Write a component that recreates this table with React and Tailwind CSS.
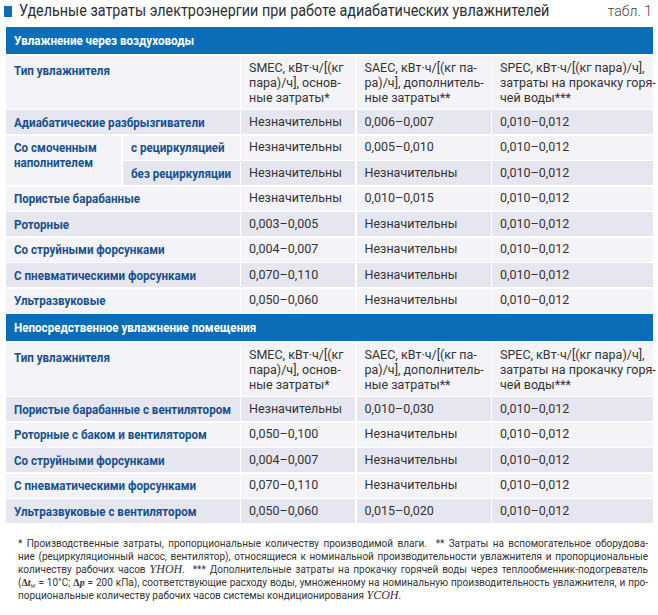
import React from 'react';

const sans = { fontFamily: 'Roboto, "Liberation Sans", sans-serif' };
const math = { fontFamily: '"Liberation Serif", serif' };

// narrow bold label: Roboto squeezed sideways to look like a condensed face
const Cond = ({ children, className = '' }) => (
  <span className={`inline-block origin-left scale-x-[0.86] whitespace-nowrap ${className}`}>{children}</span>
);

const cell = 'pl-2 flex items-center text-[#333] text-[12.5px] whitespace-nowrap';
const label = 'pl-2 flex items-center text-[#17508f] font-bold text-[13.5px]';

const HeaderRow = ({ title }) => (
  <>
    <div className="col-span-5 bg-[#0a6db8] h-[27px] flex items-center pl-2 text-white font-bold text-[13.5px]">
      <Cond>{title}</Cond>
    </div>
    <div className="col-span-2 bg-[#f3f3f8] h-[53px] pl-2 pt-[4px] text-[#17508f] font-bold text-[13.5px]">
      <Cond>Тип увлажнителя</Cond>
    </div>
    <div className="bg-[#f3f3f8] pl-2 pt-[4px] text-[#333] text-[12.5px] leading-[15px] whitespace-nowrap">
      SMEC, кВт·ч/[(кг<br />пара)/ч], основ-<br />ные затраты*
    </div>
    <div className="bg-[#f3f3f8] pl-2 pt-[4px] text-[#333] text-[12.5px] leading-[15px] whitespace-nowrap">
      SAEC, кВт·ч/[(кг па-<br />ра)/ч], дополнитель-<br />ные затраты**
    </div>
    <div className="bg-[#f3f3f8] pl-2 pt-[4px] text-[#333] text-[12.5px] leading-[15px] whitespace-nowrap">
      SPEC, кВт·ч/[(кг пара)/ч],<br />затраты на прокачку горя-<br />чей воды***
    </div>
  </>
);

const Row = ({ name, a, b, c, shaded }) => {
  const bg = shaded ? 'bg-[#e6e6f0]' : 'bg-[#f3f3f8]';
  return (
    <>
      <div className={`col-span-2 ${bg} h-[24px] ${label}`}><Cond>{name}</Cond></div>
      <div className={`${bg} ${cell}`}>{a}</div>
      <div className={`${bg} ${cell}`}>{b}</div>
      <div className={`${bg} ${cell}`}>{c}</div>
    </>
  );
};

const ducts = [
  ['Пористые барабанные', 'Незначительны', '0,010–0,015', '0,010–0,012', false],
  ['Роторные', '0,003–0,005', 'Незначительны', '0,010–0,012', true],
  ['Со струйными форсунками', '0,004–0,007', 'Незначительны', '0,010–0,012', false],
  ['С пневматическими форсунками', '0,070–0,110', 'Незначительны', '0,010–0,012', true],
  ['Ультразвуковые', '0,050–0,060', 'Незначительны', '0,010–0,012', false],
];

const rooms = [
  ['Пористые барабанные с вентилятором', 'Незначительны', '0,010–0,030', '0,010–0,012', true],
  ['Роторные с баком и вентилятором', '0,050–0,100', 'Незначительны', '0,010–0,012', false],
  ['Со струйными форсунками', '0,004–0,007', 'Незначительны', '0,010–0,012', true],
  ['С пневматическими форсунками', '0,070–0,110', 'Незначительны', '0,010–0,012', false],
  ['Ультразвуковые с вентилятором', '0,050–0,060', '0,015–0,020', '0,010–0,012', true],
];

const Line = ({ children, last }) => (
  <div className={last ? 'text-left' : 'text-justify [text-align-last:justify]'}>{children}</div>
);

export default function App() {
  return (
    <div className="w-[658px] h-[615px] bg-white overflow-hidden" style={sans}>
      <div className="flex items-center justify-between h-[22px] pl-[4px] pr-[6px]">
        <div className="flex items-center gap-[7px] min-w-0">
          <div className="w-[8px] h-[11px] bg-[#0a6db8] shrink-0" />
          <span className="inline-block origin-left scale-x-[0.87] whitespace-nowrap text-[16.5px] text-[#2e2e2e]">
            Удельные затраты электроэнергии при работе адиабатических увлажнителей
          </span>
        </div>
        <div className="shrink-0 whitespace-nowrap text-[14px] text-[#444] font-light">табл. 1</div>
      </div>

      <div className="mt-[5px] ml-[6px] w-[647px] grid grid-cols-[115px_117px_114px_134px_161px] gap-[1.5px]">
        <HeaderRow title="Увлажнение через воздуховоды" />
        <Row name="Адиабатические разбрызгиватели" a="Незначительны" b="0,006–0,007" c="0,010–0,012" shaded />

        <div className="row-span-2 bg-[#f3f3f8] pl-2 pt-[4px] text-[#17508f] font-bold text-[13.5px] leading-[15px]">
          <Cond>Со смоченным<br />наполнителем</Cond>
        </div>
        <div className={`bg-[#f3f3f8] h-[24px] ${label}`}><Cond>с рециркуляцией</Cond></div>
        <div className={`bg-[#f3f3f8] ${cell}`}>Незначительны</div>
        <div className={`bg-[#f3f3f8] ${cell}`}>0,005–0,010</div>
        <div className={`bg-[#f3f3f8] ${cell}`}>0,010–0,012</div>
        <div className={`bg-[#e6e6f0] h-[24px] ${label}`}><Cond>без рециркуляции</Cond></div>
        <div className={`bg-[#e6e6f0] ${cell}`}>Незначительны</div>
        <div className={`bg-[#e6e6f0] ${cell}`}>Незначительны</div>
        <div className={`bg-[#e6e6f0] ${cell}`}>0,010–0,012</div>

        {ducts.map(([l, a, b, c, s]) => <Row key={l} name={l} a={a} b={b} c={c} shaded={s} />)}

        <HeaderRow title="Непосредственное увлажнение помещения" />
        {rooms.map(([l, a, b, c, s]) => <Row key={l} name={l} a={a} b={b} c={c} shaded={s} />)}
      </div>

      <div className="mt-[14px] ml-[18px] w-[630px] text-[10px] leading-[13px] text-[#333]">
        <Line>* Производственные затраты, пропорциональные количеству производимой влаги. &nbsp;** Затраты на вспомогательное оборудова-</Line>
        <Line>ние (рециркуляционный насос, вентилятор), относящиеся к номинальной производительности увлажнителя и пропорциональные</Line>
        <Line>количеству рабочих часов <i className="text-[12px]" style={math}>YHOH</i>. &nbsp;*** Дополнительные затраты на прокачку горячей воды через теплообменник-подогреватель</Line>
        <Line>(<b style={math}>Δ<i>t</i></b><sub style={math}><i>w</i></sub> = 10°С; <b style={math}>Δ<i>p</i></b> = 200 кПа), соответствующие расходу воды, умноженному на номинальную производительность увлажнителя, и про-</Line>
        <Line last>порциональные количеству рабочих часов системы кондиционирования <i className="text-[12px]" style={math}>YCOH</i>.</Line>
      </div>
    </div>
  );
}
